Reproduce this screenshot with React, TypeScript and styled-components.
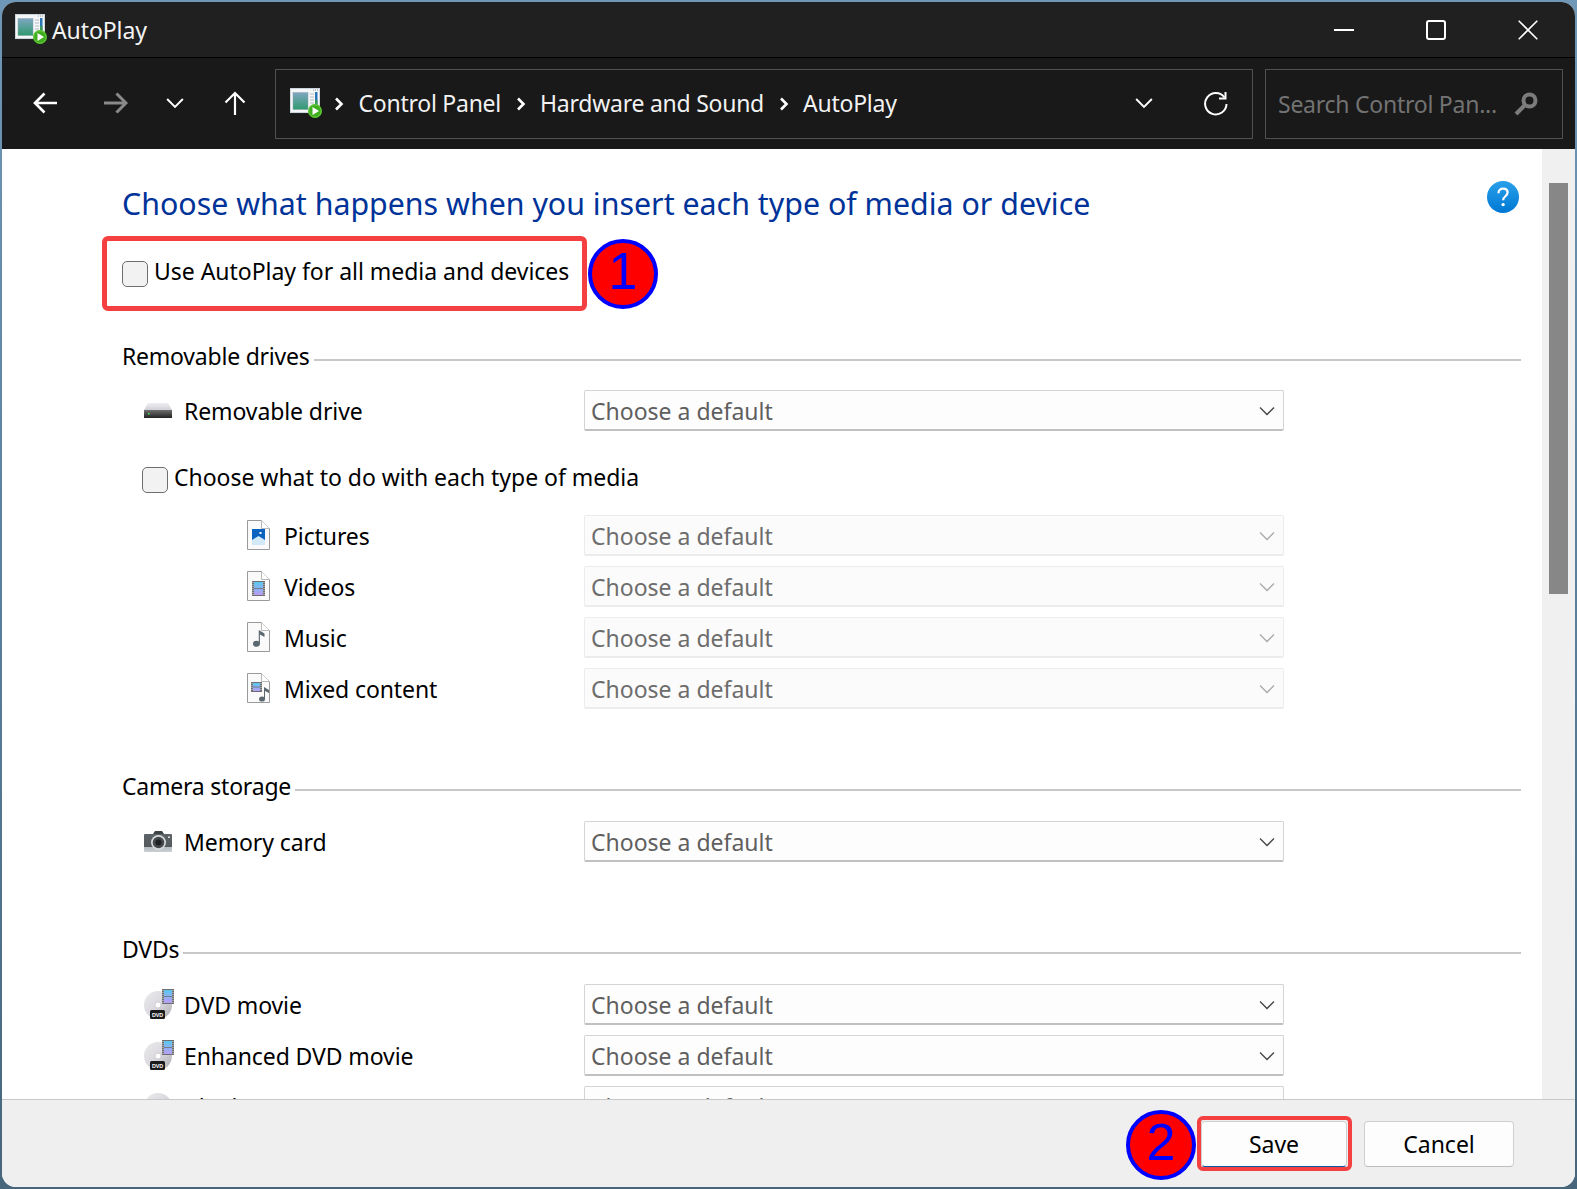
import React from "react";
import styled, { createGlobalStyle } from "styled-components";

const Global = createGlobalStyle`
  html, body { margin: 0; padding: 0; height: 100%; }
  body {
    width: 1577px; height: 1189px; overflow: hidden;
    background: linear-gradient(180deg, #6f97b8 0%, #5a7f9c 50%, #47667c 100%);
    font-family: "Noto Sans", "Open Sans", sans-serif;
  }
  * { box-sizing: border-box; }
`;

const Window = styled.div`
  position: relative;
  margin: 2px;
  width: 1573px;
  height: 1185px;
  border-radius: 14px;
  overflow: hidden;
  display: flex;
  flex-direction: column;
  background: #fff;
`;

const TitleBar = styled.header`
  height: 56px;
  flex: none;
  background: #202020;
  border-bottom: 1px solid #000;
  display: flex;
  align-items: center;
  padding-left: 13px;
  color: #fff;
`;
const TitleText = styled.span`
  margin-left: 5px;
  font-size: 23px;
  letter-spacing: -0.1px;
  color: #f4f4f4;
`;
const WinButtons = styled.div`
  margin-left: auto;
  display: flex;
  padding-right: 1px;
`;
const WinButton = styled.div`
  width: 92px;
  height: 55px;
  display: flex;
  align-items: center;
  justify-content: center;
`;

const Toolbar = styled.div`
  height: 91px;
  flex: none;
  background: #191919;
  display: flex;
  align-items: center;
  padding: 0 12px 0 13px;
`;
const NavButton = styled.div<{ $gap?: number }>`
  width: 60px;
  height: 60px;
  display: flex;
  align-items: center;
  justify-content: center;
  margin-right: ${(p) => p.$gap ?? 0}px;
`;
const AddressBar = styled.div`
  margin-left: 10px;
  width: 978px;
  height: 70px;
  border: 1px solid #505050;
  display: flex;
  align-items: center;
  padding-left: 14px;
  color: #f2f2f2;
  font-size: 23px;
  letter-spacing: -0.25px;
`;
const Crumb = styled.span`
  margin: 0 14.5px 0 14.5px;
  padding-bottom: 1px;
  white-space: nowrap;
`;
const Sep = styled.svg`
  flex: none;
  width: 10px;
  height: 14px;
`;
const SepFirst = styled(Sep)`
  margin-left: 12px;
`;
const AddressEnd = styled.div`
  margin-left: auto;
  display: flex;
  align-items: center;
  padding-right: 24px;
  gap: 50px;
`;
const SearchBox = styled.div`
  margin-left: 12px;
  width: 298px;
  height: 70px;
  border: 1px solid #505050;
  display: flex;
  align-items: center;
  justify-content: space-between;
  padding: 0 24px 0 12px;
  color: #737373;
  font-size: 23px;
  letter-spacing: -0.25px;
  white-space: nowrap;
`;

const Content = styled.div`
  flex: 1;
  min-height: 0;
  display: flex;
  overflow: hidden;
  background: #fff;
`;
const Main = styled.main`
  flex: 1;
  min-width: 0;
  padding: 31px 21px 0 120px;
  overflow: hidden;
  color: #000;
  font-size: 23px;
  letter-spacing: -0.1px;
`;
const HeadRow = styled.div`
  display: flex;
  justify-content: space-between;
`;
const Heading = styled.h1`
  margin: 0;
  height: 46px;
  line-height: 48px;
  font-weight: 400;
  font-size: 30.35px;
  letter-spacing: 0;
  color: #003399;
  white-space: nowrap;
`;
const Help = styled.svg`
  width: 32px;
  height: 32px;
  margin: 1px 2px 0 0;
`;
const Check = styled.span`
  flex: none;
  width: 26px;
  height: 26px;
  border: 1.5px solid #6e6e6e;
  border-radius: 5px;
  background: #f2f2f2;
`;
const CheckRow = styled.label<{ $top: number; $left?: number }>`
  display: flex;
  align-items: center;
  gap: 6px;
  height: 40px;
  margin-top: ${(p) => p.$top}px;
  margin-left: ${(p) => p.$left ?? 0}px;
  white-space: nowrap;
`;
const CheckText = styled.span`
  padding-bottom: 6px;
  letter-spacing: -0.03px;
`;
const AnnotatedRow = styled.div`
  position: relative;
`;
const RedBox = styled.div`
  position: absolute;
  left: -20px;
  top: -18px;
  width: 485px;
  height: 75px;
  border: 5px solid #f44040;
  border-radius: 6px;
`;
const Badge = styled.div<{ $x: number; $y: number }>`
  position: absolute;
  left: ${(p) => p.$x}px;
  top: ${(p) => p.$y}px;
  width: 70px;
  height: 70px;
  border-radius: 50%;
  background: #ff0000;
  border: 4px solid #0000ff;
  color: #0000ff;
  font: 400 52px/56px "Liberation Sans", Arial, sans-serif;
  letter-spacing: 0;
  text-align: center;
`;

const SectionHead = styled.div<{ $top: number }>`
  display: flex;
  align-items: center;
  gap: 4px;
  height: 34px;
  margin-top: ${(p) => p.$top}px;
  white-space: nowrap;
`;
const SectionText = styled.span`
  padding-bottom: 2px;
  letter-spacing: -0.22px;
`;
const Rule = styled.span`
  flex: 1;
  height: 2px;
  margin-top: 5px;
  background: #c8c8c8;
`;
const Row = styled.div<{ $top: number }>`
  display: grid;
  grid-template-columns: 462px 700px;
  align-items: center;
  margin-top: ${(p) => p.$top}px;
`;
const RowLabel = styled.div<{ $indent: number; $gap: number }>`
  display: flex;
  align-items: center;
  gap: ${(p) => p.$gap}px;
  padding-left: ${(p) => p.$indent}px;
  white-space: nowrap;
`;
const FileWrap = styled.span`
  display: flex;
  margin-bottom: 2px;
`;
const DiscWrap = styled.span`
  display: flex;
  margin-bottom: 2px;
`;
const Select = styled.div<{ $off?: boolean }>`
  height: 41px;
  display: flex;
  align-items: center;
  justify-content: space-between;
  padding: 1px 8px 0 6px;
  background: ${(p) => (p.$off ? "#fbfbfb" : "#fdfdfd")};
  border: 1px solid ${(p) => (p.$off ? "#ececec" : "#d4d4d4")};
  border-bottom: 2px solid ${(p) => (p.$off ? "#ececec" : "#c0c0c0")};
  border-radius: 2px;
  color: ${(p) => (p.$off ? "#6d6d6d" : "#5f5f5f")};
  font-size: 23px;
  letter-spacing: 0;
`;
const Caret = styled.svg`
  width: 16px;
  height: 10px;
`;

const Scrollbar = styled.aside`
  flex: none;
  width: 33px;
  background: #f0f0f0;
  padding: 34px 7px 0;
`;
const Thumb = styled.div`
  height: 411px;
  background: #878787;
`;
const Footer = styled.footer`
  flex: none;
  height: 88px;
  background: #efefef;
  border-top: 1px solid #c8c8c8;
  display: flex;
  align-items: center;
  justify-content: flex-end;
  gap: 17px;
  padding-right: 61px;
`;
const Button = styled.div<{ $w: number; $primary?: boolean }>`
  position: relative;
  width: ${(p) => p.$w}px;
  height: 46px;
  display: flex;
  align-items: center;
  justify-content: center;
  background: #fdfdfd;
  border: 1px solid #cfcfcf;
  border-bottom-color: ${(p) => (p.$primary ? "#0a58a8" : "#bdbdbd")};
  border-radius: 4px;
  font-size: 23px;
  color: #000;
`;
const RedFrame = styled.div`
  position: absolute;
  inset: -5.5px;
  border: 4.5px solid #f44040;
  border-radius: 6px;
`;

const AppIcon = ({ size = 32 }: { size?: number }) => (
  <svg width={size} height={size * 0.94} viewBox="0 0 32 30">
    <defs>
      <linearGradient id="appPic" x1="0" y1="0" x2="0" y2="1">
        <stop offset="0" stopColor="#7fa6c2" />
        <stop offset="1" stopColor="#2f9a6e" />
      </linearGradient>
    </defs>
    <rect x="0.5" y="0.5" width="29" height="24" fill="#f4f6f8" stroke="#cfd6dc" />
    <rect x="3" y="4.5" width="15" height="17" fill="url(#appPic)" stroke="#8fa3b0" strokeWidth="0.5" />
    <rect x="25" y="4" width="2.5" height="12" fill="#2a74b8" />
    <rect x="25" y="12" width="2.5" height="5" fill="#3a9a5a" />
    <path d="M20 6h4M20 9h4M20 12h4M20 15h4" stroke="#b4bcc4" strokeWidth="1" />
    <path d="M23 2h1M25 2h1M27 2h1" stroke="#8a949c" strokeWidth="1" />
    <circle cx="25" cy="23" r="7" fill="#3fae1e" />
    <circle cx="25" cy="23" r="6.2" fill="none" stroke="#78d64a" strokeWidth="0.8" />
    <path d="M22.5 19l6.5 4-6.5 4z" fill="#fff" />
  </svg>
);

const Arrow = ({ dir, color = "#fff", weight = 2.7 }: { dir: "left" | "right" | "up"; color?: string; weight?: number }) => {
  const d =
    dir === "left"
      ? "M24 12H2M11.5 2.5 2 12l9.5 9.5"
      : dir === "right"
      ? "M1 12h22M13.5 2.5 23 12l-9.5 9.5"
      : "M12 24V2M2.5 11.5 12 2l9.5 9.5";
  return (
    <svg width="25" height="25" viewBox="0 0 25 25" fill="none">
      <path d={d} stroke={color} strokeWidth={weight} />
    </svg>
  );
};

const FileIcon = ({ children }: { children: React.ReactNode }) => (
  <FileWrap>
    <svg width="23" height="30" viewBox="0 0 23 30">
      <path d="M.5.5h14l8 8v21H.5z" fill="#fafafa" stroke="#9a9a9a" />
      <path d="M14.5.5v8h8" fill="#fff" stroke="#b8b8b8" />
      {children}
    </svg>
  </FileWrap>
);

const FilmStrip = ({ x, y, w, h }: { x: number; y: number; w: number; h: number }) => (
  <g>
    <rect x={x} y={y} width={w} height={h} fill="#6c6f72" />
    <defs>
      <linearGradient id={`film${x}${y}`} x1="0" y1="0" x2="0" y2="1">
        <stop offset="0" stopColor="#59c8ef" />
        <stop offset="1" stopColor="#bb9cf5" />
      </linearGradient>
    </defs>
    <rect x={x + 2} y={y + 1} width={w - 4} height={h - 2} fill={`url(#film${x}${y})`} />
    <path d={`M${x + 2} ${y + h / 2}h${w - 4}`} stroke="#6c6f72" strokeWidth="0.8" />
    <path
      d={`M${x + 1} ${y + 1}V${y + h - 1}M${x + w - 1} ${y + 1}V${y + h - 1}`}
      stroke="#e0e0e0"
      strokeWidth="0.9"
      strokeDasharray="1 1"
    />
  </g>
);

const PicturesIcon = () => (
  <FileIcon>
    <rect x="5" y="9" width="13" height="16" fill="#0a63bf" />
    <path d="M5 25v-5l6.5-4 6.5 4v5z" fill="#d4e9f8" />
    <rect x="12.5" y="12" width="2" height="2" fill="#fff" />
  </FileIcon>
);
const VideosIcon = () => (
  <FileIcon>
    <FilmStrip x={5} y={10} w={13} h={15} />
  </FileIcon>
);
const NoteShape = ({ x, y, s = 1 }: { x: number; y: number; s?: number }) => (
  <g transform={`translate(${x} ${y}) scale(${s})`}>
    <ellipse cx="3" cy="12" rx="3" ry="2.6" fill="#5c6870" />
    <path d="M5 12V0l5 3v3L6 4v8z" fill="#5c6870" />
  </g>
);
const MusicIcon = () => (
  <FileIcon>
    <NoteShape x={6} y={8} s={1.15} />
  </FileIcon>
);
const MixedIcon = () => (
  <FileIcon>
    <FilmStrip x={4} y={9} w={11} h={10} />
    <NoteShape x={12} y={14} />
  </FileIcon>
);

const DriveIcon = () => (
  <svg width="28" height="16" viewBox="0 0 28 16">
    <defs>
      <linearGradient id="drvTop" x1="0" y1="0" x2="0" y2="1">
        <stop offset="0" stopColor="#eeeef2" />
        <stop offset="1" stopColor="#d0d0d8" />
      </linearGradient>
      <linearGradient id="drvBot" x1="0" y1="0" x2="0" y2="1">
        <stop offset="0" stopColor="#707070" />
        <stop offset="1" stopColor="#232323" />
      </linearGradient>
    </defs>
    <path d="M4 0h20l4 7H0z" fill="url(#drvTop)" />
    <rect x="0" y="7" width="28" height="8" fill="url(#drvBot)" />
    <rect x="4" y="10" width="1.6" height="1.6" fill="#45e04a" />
  </svg>
);

const CameraIcon = () => (
  <svg width="28" height="22" viewBox="0 0 28 22">
    <defs>
      <linearGradient id="camBody" x1="0" y1="0" x2="0" y2="1">
        <stop offset="0" stopColor="#5d6468" />
        <stop offset="0.7" stopColor="#535a5e" />
        <stop offset="0.75" stopColor="#b6bec4" />
        <stop offset="1" stopColor="#c8d0d4" />
      </linearGradient>
    </defs>
    <path d="M9 3l2-3h7l2 3z" fill="#3c4144" />
    <rect x="0" y="3" width="28" height="18" rx="1" fill="url(#camBody)" />
    <circle cx="14.5" cy="11.5" r="7.5" fill="#d8d8d8" />
    <circle cx="14.5" cy="11.5" r="5.8" fill="#43484c" />
    <circle cx="14.5" cy="11.5" r="3" fill="#1d1f21" />
    <rect x="24" y="5.5" width="2" height="1.5" fill="#e0e0e0" />
  </svg>
);

const DvdIcon = ({ blank }: { blank?: boolean }) => (
  <DiscWrap>
    <svg width="30" height="30" viewBox="0 0 30 30">
      <defs>
        <linearGradient id="disc" x1="0" y1="0" x2="1" y2="1">
          <stop offset="0" stopColor="#e8ecea" />
          <stop offset="0.5" stopColor="#dcd8e0" />
          <stop offset="1" stopColor="#a8acae" />
        </linearGradient>
      </defs>
      <circle cx="14" cy="16" r="14" fill="url(#disc)" />
      <circle cx="14" cy="16" r="3" fill="#fff" stroke="#bbb" strokeWidth="0.6" />
      {!blank && <FilmStrip x={18} y={0} w={12} h={15} />}
      <rect x="6" y="21" width="15" height="9" rx="1.5" fill="#1a1a1a" />
      <text x="13.5" y="27.6" fontFamily="Liberation Sans, sans-serif" fontSize="5.4" fontWeight="700" textAnchor="middle" fill="#fff">
        DVD
      </text>
    </svg>
  </DiscWrap>
);

const Chevron = ({ color = "#fff", w = 18 }: { color?: string; w?: number }) => (
  <svg width={w} height={w * 0.6} viewBox="0 0 18 11" fill="none">
    <path d="M1 1l8 8 8-8" stroke={color} strokeWidth="2" />
  </svg>
);
const BoldSep = ({ first }: { first?: boolean }) => {
  const C = first ? SepFirst : Sep;
  return (
    <C viewBox="0 0 10 14" fill="none">
      <path d="M2 1.5 7.5 7 2 12.5" stroke="#fff" strokeWidth="2.6" />
    </C>
  );
};

const Choice = ({ off }: { off?: boolean }) => (
  <Select $off={off}>
    Choose a default
    <Caret viewBox="0 0 16 10" fill="none">
      <path d="M1 1.5l7 7 7-7" stroke={off ? "#aaa" : "#444"} strokeWidth="1.3" />
    </Caret>
  </Select>
);

const media: [string, React.ReactNode][] = [
  ["Pictures", <PicturesIcon />],
  ["Videos", <VideosIcon />],
  ["Music", <MusicIcon />],
  ["Mixed content", <MixedIcon />],
];

export default function App() {
  return (
    <Window>
      <Global />
      <TitleBar>
        <AppIcon />
        <TitleText>AutoPlay</TitleText>
        <WinButtons>
          <WinButton>
            <svg width="20" height="20" viewBox="0 0 20 20">
              <rect x="0" y="9" width="20" height="2" fill="#fff" />
            </svg>
          </WinButton>
          <WinButton>
            <svg width="20" height="20" viewBox="0 0 20 20" fill="none">
              <rect x="1" y="1" width="18" height="18" rx="2" stroke="#fff" strokeWidth="2" />
            </svg>
          </WinButton>
          <WinButton>
            <svg width="20" height="20" viewBox="0 0 20 20" fill="none">
              <path d="M.7.7l18.6 18.6M19.3.7.7 19.3" stroke="#fff" strokeWidth="1.6" />
            </svg>
          </WinButton>
        </WinButtons>
      </TitleBar>
      <Toolbar>
        <NavButton $gap={10}>
          <Arrow dir="left" />
        </NavButton>
        <NavButton>
          <Arrow dir="right" color="#8a8a8a" weight={3} />
        </NavButton>
        <NavButton>
          <Chevron />
        </NavButton>
        <NavButton>
          <Arrow dir="up" weight={2.2} />
        </NavButton>
        <AddressBar>
          <AppIcon />
          <BoldSep first />
          <Crumb>Control Panel</Crumb>
          <BoldSep />
          <Crumb>Hardware and Sound</Crumb>
          <BoldSep />
          <Crumb>AutoPlay</Crumb>
          <AddressEnd>
            <Chevron />
            <svg width="25" height="25" viewBox="0 0 25 25" fill="none">
              <path d="M21.5 6.5A10.7 10.7 0 1 0 23.5 13" stroke="#fff" strokeWidth="2" />
              <path d="M22.5 1v6.5H16" stroke="#fff" strokeWidth="2" />
            </svg>
          </AddressEnd>
        </AddressBar>
        <SearchBox>
          Search Control Pan...
          <svg width="24" height="24" viewBox="0 0 24 24" fill="none">
            <circle cx="15.5" cy="8.5" r="6" stroke="#7c7c7c" strokeWidth="4" />
            <path d="M10.5 13.5 2 22" stroke="#7c7c7c" strokeWidth="4" />
          </svg>
        </SearchBox>
      </Toolbar>
      <Content>
        <Main>
          <HeadRow>
            <Heading>Choose what happens when you insert each type of media or device</Heading>
            <Help viewBox="0 0 32 32">
              <defs>
                <linearGradient id="helpBg" x1="0" y1="0" x2="0" y2="1">
                  <stop offset="0" stopColor="#2aa0ea" />
                  <stop offset="1" stopColor="#0078d4" />
                </linearGradient>
              </defs>
              <circle cx="16" cy="16" r="16" fill="url(#helpBg)" />
              <path d="M11.5 12.2c0-3 2-4.600 4.600-4.600 2.700 0 4.500 1.700 4.500 4 0 3.600-4.500 3.800-4.500 7.600" fill="none" stroke="#fff" strokeWidth="2.2" />
              <circle cx="16.1" cy="23.6" r="1.7" fill="#fff" />
            </Help>
          </HeadRow>
          <AnnotatedRow>
            <CheckRow $top={28}>
              <Check />
              <CheckText>Use AutoPlay for all media and devices</CheckText>
            </CheckRow>
            <RedBox />
            <Badge $x={466} $y={-15}>1</Badge>
          </AnnotatedRow>

          <SectionHead $top={46}>
            <SectionText>Removable drives</SectionText>
            <Rule />
          </SectionHead>
          <Row $top={16}>
            <RowLabel $indent={22} $gap={12}>
              <DriveIcon />
              Removable drive
            </RowLabel>
            <Choice />
          </Row>
          <CheckRow $top={29} $left={20}>
            <Check />
            <CheckText>Choose what to do with each type of media</CheckText>
          </CheckRow>
          {media.map(([label, icon], i) => (
            <Row key={label} $top={i === 0 ? 15 : 10}>
              <RowLabel $indent={125} $gap={14}>
                {icon}
                {label}
              </RowLabel>
              <Choice off />
            </Row>
          ))}

          <SectionHead $top={61}>
            <SectionText>Camera storage</SectionText>
            <Rule />
          </SectionHead>
          <Row $top={17}>
            <RowLabel $indent={22} $gap={12}>
              <CameraIcon />
              Memory card
            </RowLabel>
            <Choice />
          </Row>

          <SectionHead $top={71}>
            <SectionText>DVDs</SectionText>
            <Rule />
          </SectionHead>
          <Row $top={17}>
            <RowLabel $indent={22} $gap={10}>
              <DvdIcon />
              DVD movie
            </RowLabel>
            <Choice />
          </Row>
          <Row $top={10}>
            <RowLabel $indent={22} $gap={10}>
              <DvdIcon />
              Enhanced DVD movie
            </RowLabel>
            <Choice />
          </Row>
          <Row $top={10}>
            <RowLabel $indent={22} $gap={10}>
              <DvdIcon blank />
              Blank DVD
            </RowLabel>
            <Choice />
          </Row>
        </Main>
        <Scrollbar>
          <Thumb />
        </Scrollbar>
      </Content>
      <Footer>
        <Button $w={146} $primary>
          Save
          <RedFrame />
          <Badge $x={-76} $y={-12}>2</Badge>
        </Button>
        <Button $w={150}>Cancel</Button>
      </Footer>
    </Window>
  );
}
